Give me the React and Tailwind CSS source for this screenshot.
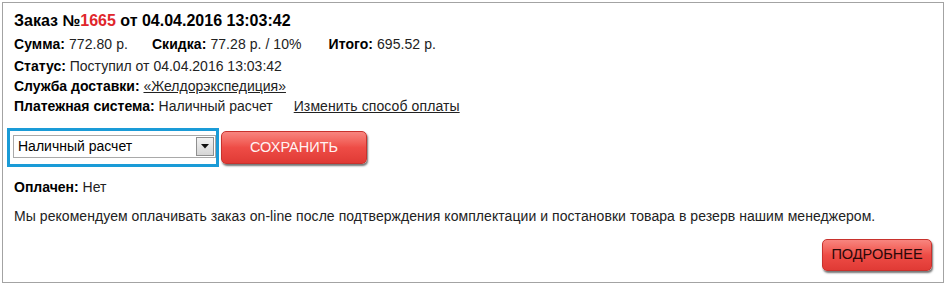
import React from 'react';

const font = { fontFamily: '"Liberation Sans", Arial, sans-serif' };

const RedButton = ({ children, className = '', textClass = '' }) => (
    <button
        className={`rounded-[5px] border border-[#c8322d] bg-gradient-to-b from-[#f8857f] via-[#ee4c46] to-[#e03a35] shadow-[1px_2px_2px_rgba(0,0,0,0.55)] flex items-center justify-center ${className}`}
    >
        <span className={textClass}>{children}</span>
    </button>
);

const App = () => {
    return (
        <div className="w-[948px] h-[290px] bg-white p-[2px] text-[14px] text-[#222]" style={font}>
            <div className="w-[942px] h-[281px] border border-[#a3a3a3] flex flex-col pl-[11px] pt-[7px]">
                {/* Header */}
                <div className="text-[16px] leading-[22px] font-bold text-black">
                    Заказ №<span className="text-[#e0262b]">1665</span> от 04.04.2016 13:03:42
                </div>

                {/* Totals */}
                <div className="mt-[2px] leading-[20px] tracking-[0.06px]">
                    <b className="text-black">Сумма:</b> 772.80 р.
                    <b className="text-black ml-[24px]">Скидка:</b> 77.28 р. / 10%
                    <b className="text-black ml-[27px]">Итого:</b> 695.52 р.
                </div>
                <div className="mt-[2px] leading-[20px]">
                    <b className="text-black">Статус:</b> Поступил от 04.04.2016 13:03:42
                </div>
                <div className="leading-[20px]">
                    <b className="text-black">Служба доставки:</b>{' '}
                    <a href="#" className="underline text-[#222]">«Желдорэкспедиция»</a>
                </div>
                <div className="leading-[20px]">
                    <b className="text-black">Платежная система:</b> Наличный расчет
                    <a href="#" className="underline text-[#222] ml-[21px] tracking-[0.1px]">Изменить способ оплаты</a>
                </div>

                {/* Payment form */}
                <div className="flex items-center mt-[12px] -ml-[7px]">
                    <div className="w-[212px] h-[39px] border-[3px] border-[#1a9bd7] pl-[3px] pt-[4px]">
                        <div className="w-[203px] h-[23px] border border-[#a9a9a9] bg-white flex items-center">
                            <span className="flex-1 pl-[4px] text-[14px] text-black">Наличный расчет</span>
                            <div className="w-[18px] h-[19px] mr-[1px] border border-[#8f8f8f] bg-gradient-to-b from-[#f2f2f2] to-[#d6d6d6] flex items-center justify-center">
                                <svg width="8" height="5" viewBox="0 0 8 5">
                                    <path d="M0 0h8L4 4.5z" fill="#111" />
                                </svg>
                            </div>
                        </div>
                    </div>
                    <RedButton className="ml-[2px] w-[146px] h-[33px]" textClass="text-[14.5px] text-[#fff3f3]">
                        СОХРАНИТЬ
                    </RedButton>
                </div>

                <div className="mt-[10px] leading-[20px]">
                    <b className="text-black">Оплачен:</b> Нет
                </div>

                <div className="mt-[9px] leading-[20px] tracking-[0.06px]">
                    Мы рекомендуем оплачивать заказ on-line после подтверждения комплектации и постановки товара в резерв нашим менеджером.
                </div>

                <div className="flex justify-end mt-[13px] pr-[11px]">
                    <RedButton className="w-[110px] h-[32px]" textClass="text-[14.5px] text-[#2a0808]">
                        ПОДРОБНЕЕ
                    </RedButton>
                </div>
            </div>
        </div>
    );
};

export default App;
